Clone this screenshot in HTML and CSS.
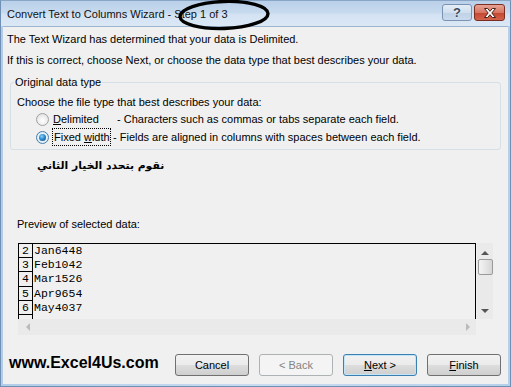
FILE: index.html
```html
<!DOCTYPE html>
<html lang="en">
<head>
  <meta charset="UTF-8">
  <title>Convert Text to Columns Wizard - Step 1 of 3</title>
  <link rel="stylesheet" href="styles.css">
</head>
<body>
<div class="window">
  <div class="titlebar">
    <span class="title">Convert Text to Columns Wizard - Step 1 of 3</span>
    <!-- hand drawn mark round the step -->
    <svg class="mark" width="96" height="34" viewBox="0 0 96 34">
      <ellipse cx="47" cy="15" rx="44" ry="13.5" fill="none" stroke="#000" stroke-width="3.4" transform="rotate(-2 47 15)"/>
    </svg>
    <div class="caption-btns">
      <button type="button" class="cap-btn help" aria-label="Help">?</button>
      <button type="button" class="cap-btn close" aria-label="Close">
        <svg width="16" height="12" viewBox="0 0 16 12">
          <path d="M2.5 1.5h3.2L8 4.3l2.3-2.8h3.2L9.8 6l3.7 4.5h-3.2L8 7.7l-2.3 2.8H2.5L6.2 6z" fill="#fff" stroke="#4a2018" stroke-width="1" stroke-linejoin="round"/>
        </svg>
      </button>
    </div>
  </div>

  <div class="client">
    <p class="line">The Text Wizard has determined that your data is Delimited.</p>
    <p class="line">If this is correct, choose Next, or choose the data type that best describes your data.</p>

    <fieldset class="group">
      <legend>Original data type</legend>
      <div class="choose">Choose the file type that best describes your data:</div>
      <label class="opt">
        <input type="radio" name="type">
        <span class="opt-name name-1"><u>D</u>elimited</span>
        <span class="opt-desc">- Characters such as commas or tabs separate each field.</span>
      </label>
      <label class="opt">
        <input type="radio" name="type" checked>
        <span class="opt-name name-2"><span class="focus">Fixed <u>w</u>idth</span></span>
        <span class="opt-desc">- Fields are aligned in columns with spaces between each field.</span>
      </label>
    </fieldset>

    <div class="note"><span dir="rtl">نقوم بتحدد الخيار الثاني</span></div>

    <div class="preview-label">Preview of selected data:</div>
    <div class="preview">
      <div class="preview-main">
        <div class="grid">
          <div class="row"><span class="num">2</span><span class="val">Jan6448</span></div>
          <div class="row"><span class="num">3</span><span class="val">Feb1042</span></div>
          <div class="row"><span class="num">4</span><span class="val">Mar1526</span></div>
          <div class="row"><span class="num">5</span><span class="val">Apr9654</span></div>
          <div class="row"><span class="num">6</span><span class="val">May4037</span></div>
          <div class="row"><span class="num"></span><span class="val"></span></div>
        </div>
        <div class="vscroll">
          <span class="arrow up"></span>
          <span class="thumb"></span>
          <span class="arrow down"></span>
        </div>
      </div>
      <div class="hscroll">
        <span class="arrow left"></span>
        <span class="arrow right"></span>
      </div>
    </div>

    <div class="footer">
      <span class="site">www.Excel4Us.com</span>
      <div class="buttons">
        <button type="button" class="btn">Cancel</button>
        <button type="button" class="btn" disabled>&lt; Back</button>
        <button type="button" class="btn default"><u>N</u>ext &gt;</button>
        <button type="button" class="btn"><u>F</u>inish</button>
      </div>
    </div>
  </div>
</div>
</body>
</html>
```

FILE: styles.css
```css
* { box-sizing: border-box; }
body {
  margin: 0;
  font-family: "Liberation Sans", Arial, sans-serif;
  font-size: 11px;
  color: #000;
  background: #fff;
}
.window {
  width: 511px;
  height: 387px;
  display: flex;
  flex-direction: column;
  background: linear-gradient(90deg, #b3cde9, #c9dcf0 50%, #b7d0ea);
  border: 1px solid #6f8fb5;
  border-top-color: #8aa6c6;
}

/* title bar */
.titlebar {
  position: relative;
  height: 25px;
  display: flex;
  align-items: center;
  padding: 0 5px 0 6px;
  background: linear-gradient(180deg, #bad0e9 0%, #c6d9ee 45%, #d4e3f3 55%, #dae7f5 100%);
}
.title { color: #111; padding-top: 1px; }
.mark {
  position: absolute;
  left: 176px;
  top: -1px;
}
.caption-btns { margin-left: auto; display: flex; gap: 2px; margin-top: -2px; }
.cap-btn {
  height: 17px;
  border-radius: 3px;
  padding: 0;
  display: flex;
  align-items: center;
  justify-content: center;
}
.help {
  width: 30px;
  border: 1px solid #7a93b2;
  background: linear-gradient(#e4edf7, #d0deee 50%, #bfd1e6 51%, #c9daed);
  color: #3c4a5c;
  font: bold 13px "Liberation Sans", Arial, sans-serif;
  text-shadow: 0 0 2px #fff;
}
.close {
  width: 31px;
  border: 1px solid #7b2d22;
  background: linear-gradient(#e7a497, #d77763 50%, #c4462f 51%, #d2634b);
}
.close svg { display: block; }

/* client area */
.client {
  flex: 1;
  margin: 0 2px 2px;
  background: #f0f0f0;
  border-top: 1px solid #9db5d0;
  padding: 2px 7px 0 4px;
  display: flex;
  flex-direction: column;
}
.line { margin: 0; line-height: 21px; }

.group {
  margin: 4px 0 0 3px;
  padding: 5px 6px 3px;
  border: 1px solid #d5dfe5;
  border-radius: 3px;
}
.group legend {
  padding: 0 1px;
  margin-left: -3px;
  line-height: 14px;
}
.choose { line-height: 16px; }
.opt {
  display: flex;
  align-items: center;
  height: 18px;
  padding-left: 19px;
}
.opt input {
  appearance: none;
  -webkit-appearance: none;
  width: 13px;
  height: 13px;
  margin: 0 3px 0 0;
  border-radius: 50%;
  border: 1px solid #a2a2a2;
  background: radial-gradient(circle at 50% 60%, #fff 0, #f2f2f2 40%, #d9d9d9 100%);
  position: relative;
}
.opt input:checked {
  border-color: #4a7ea8;
  background: radial-gradient(circle at 50% 50%, #fff 0, #e8f4fc 50%, #c4def0 100%);
}
.opt input:checked::after {
  content: "";
  position: absolute;
  left: 2px;
  top: 2px;
  width: 7px;
  height: 7px;
  border-radius: 50%;
  background: radial-gradient(circle at 40% 35%, #8fd0f6 0, #2b8bd3 45%, #0d3e6f 100%);
}
.opt-name { display: inline-block; }
.name-1 { width: 65px; padding-left: 1px; }
.name-2 { width: 61px; }
.focus {
  display: inline-block;
  border: 1px dotted #000;
  padding: 1px 0 1px 1px;
  line-height: 14px;
}

.note {
  margin: 8px 0 0 30px;
  font: bold 10.8px "DejaVu Sans", sans-serif;
  line-height: 16px;
}

.preview-label { margin: 42px 0 0 10px; line-height: 16px; }

.preview { margin: 11px 8px 0 11px; }
.preview-main { display: flex; gap: 1px; height: 76px; }
.grid {
  flex: 1;
  border: 1px solid #000;
  border-bottom: none;
  overflow: hidden;
  font: 11.5px "Liberation Mono", "Courier New", monospace;
}
.row { display: flex; height: 14.2px; line-height: 14px; }
.num {
  width: 14px;
  padding-left: 3px;
  border-right: 1px solid #000;
  border-bottom: 1px solid #000;
}
.val { padding-left: 1px; }

.vscroll {
  width: 16px;
  background: #eaeaea;
  display: flex;
  flex-direction: column;
  align-items: center;
  padding-top: 8px;
}
.thumb {
  width: 15px;
  height: 16px;
  margin-top: 4px;
  border: 1px solid #9a9a9a;
  border-radius: 2px;
  background: linear-gradient(90deg, #f4f4f4, #e6e6e6 50%, #d6d6d6);
}
.arrow { width: 0; height: 0; border: 4px solid transparent; }
.arrow.up { border-bottom-color: #555; border-top-width: 0; }
.arrow.down { border-top-color: #555; border-bottom-width: 0; margin-top: auto; margin-bottom: 6px; }
.hscroll {
  width: 458px;
  height: 16px;
  background: #eaeaea;
  display: flex;
  align-items: center;
  justify-content: space-between;
  padding: 0 6px 0 8px;
}
.arrow.left { border-right-color: #bbb; border-left-width: 0; }
.arrow.right { border-left-color: #bbb; border-right-width: 0; }

/* bottom row */
.footer {
  display: flex;
  align-items: flex-start;
  margin-top: 19px;
}
.site {
  font: bold 16px "Liberation Sans", Arial, sans-serif;
  padding-left: 2px;
}
.buttons { margin-left: auto; display: flex; gap: 10px; }
.btn {
  width: 74px;
  height: 22px;
  padding: 0;
  border: 1px solid #707070;
  border-radius: 3px;
  background: linear-gradient(#f2f2f2 0%, #ebebeb 48%, #dddddd 52%, #cfcfcf 100%);
  font: 11px "Liberation Sans", Arial, sans-serif;
  color: #000;
}
.btn.default {
  border-color: #3c7fb1;
  box-shadow: inset 0 0 0 1px #c4e5f6;
}
.btn:disabled {
  border-color: #adb2b5;
  background: #f4f4f4;
  color: #838383;
}
```
